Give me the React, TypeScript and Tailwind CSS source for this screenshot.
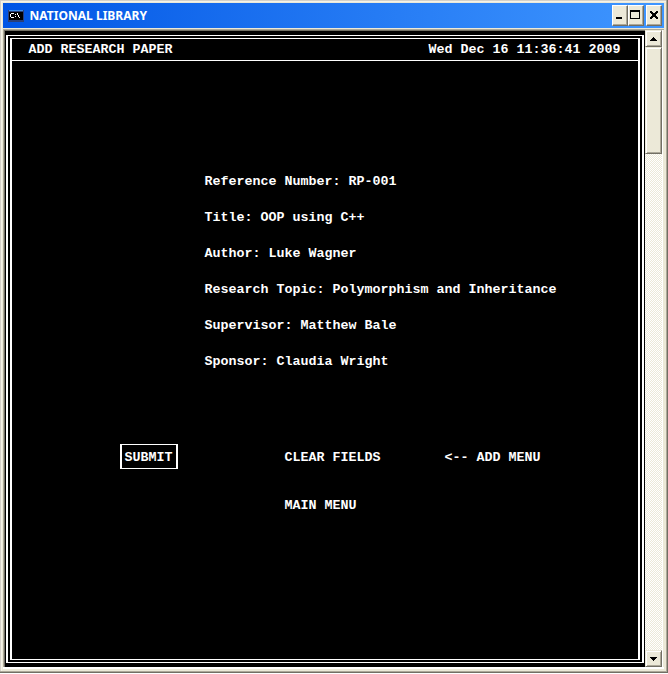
import React from "react";

const box = "h-[21px] border border-t-[#fff] border-l-[#fff] border-r-[#716f64] border-b-[#716f64] bg-[#ece9d8] shadow-[inset_-1px_-1px_0_#aca899] flex items-center justify-center";

function Line({ text, className = "" }: { text: string; className?: string }) {
  return <div className={"h-3 whitespace-pre " + className}>{text}</div>;
}

const fields = [
  "Reference Number: RP-001",
  "Title: OOP using C++",
  "Author: Luke Wagner",
  "Research Topic: Polymorphism and Inheritance",
  "Supervisor: Matthew Bale",
  "Sponsor: Claudia Wright",
];

function TitleBar() {
  return (
    <div className="flex h-[25px] shrink-0 items-center bg-linear-to-r from-[#0055e5] to-[#3f96ff] pr-[2px] pl-[5px]">
      <svg width="16" height="14" viewBox="0 0 16 14" shapeRendering="crispEdges">
        <path fill="#2a3f78" d="M0 1h16v12H0z" />
        <path fill="#3f8fe8" d="M1 1h14v1H1z" />
        <path fill="#000" d="M1 3h14v8H1z" />
        <path fill="#fff" d="M3 4h3v1H3zM2 5h1v3H2zM3 8h3v1H3zM7 5h1v1H7zM7 7h1v1H7zM9 4h1v2H9zM10 6h1v2h-1zM11 8h1v1h-1z" />
      </svg>
      <span className="ml-[5px] w-[118px] font-['Noto_Sans',sans-serif] text-[13px] leading-[25px] font-bold whitespace-nowrap">
        <svg className="overflow-visible" width="118" height="25">
          <text x="0.5" y="17" textLength="117.5" lengthAdjust="spacingAndGlyphs" fill="#fff">NATIONAL LIBRARY</text>
        </svg>
      </span>
      <div className="ml-auto flex">
        <div className={box + " w-4"}>
          <svg className="shrink-0" width="14" height="19" shapeRendering="crispEdges"><path d="M3 11h6v2H3z" /></svg>
        </div>
        <div className={box + " w-4"}>
          <svg className="shrink-0" width="14" height="19" shapeRendering="crispEdges"><path fillRule="evenodd" d="M1 4h10v9H1zM2 6v6h8V6z" /></svg>
        </div>
        <div className={box + " ml-0.5 w-4"}>
          <svg className="shrink-0" width="14" height="19" shapeRendering="crispEdges"><path d="M3 5h2v1H3zM9 5h2v1H9zM3 6h3v1H3zM8 6h3v1H8zM4 7h6v1H4zM5 8h4v2H5zM4 10h6v1H4zM3 11h3v1H3zM8 11h3v1H8zM3 12h2v1H3zM9 12h2v1H9z" /></svg>
        </div>
      </div>
    </div>
  );
}

function ScrollBar() {
  const part = "border border-t-[#ece9d8] border-l-[#ece9d8] border-r-[#716f64] border-b-[#716f64] bg-[#ece9d8] shadow-[inset_1px_1px_0_#fff,inset_-1px_-1px_0_#aca899]";
  return (
    <div className="flex w-[17px] shrink-0 flex-col bg-[conic-gradient(#fff_25%,#ece9d8_0_50%,#fff_0_75%,#ece9d8_0)] bg-size-[2px_2px]">
      <div className={part + " h-[17px]"}>
        <svg width="15" height="15" shapeRendering="crispEdges"><path d="M7 6h1v1h1v1h1v1h1v1H4V9h1V8h1V7h1z" /></svg>
      </div>
      <div className={part + " h-[107px]"} />
      <div className={part + " mt-auto h-[17px]"}>
        <svg width="15" height="15" shapeRendering="crispEdges"><path d="M4 6h7v1h-1v1H9v1H8v1H7V9H6V8H5V7H4z" /></svg>
      </div>
    </div>
  );
}

export default function App() {
  return (
    <div className="h-[674px] w-[668px] overflow-hidden bg-[#ece9d8] shadow-[inset_0_-1px_0_#fff,inset_-1px_-2px_0_#716f64,inset_-2px_-3px_0_#aca899,inset_1px_1px_0_#d4d0c8,inset_2px_2px_0_#f5f3e8]">
      <div className="flex h-[667px] flex-col pt-[3px] pr-1 pl-[3px]">
        <TitleBar />
        <div className="mt-px flex min-h-0 flex-1 border-t border-l border-[#aca899] shadow-[0_2px_0_#fff,0_1px_0_#ece9d8]">
          <div className="flex w-[641px] border-t border-l border-[#716f64] bg-black pt-[4px] pr-px pb-1 pl-px">
            <div className="flex flex-1 border-x-2 border-y border-white px-[2px] py-[2px]">
              <div className="flex-1 border-x-2 border-y border-white font-['Liberation_Mono',monospace] text-[13.333px] leading-[13px] font-bold text-white">
                <div className="flex h-[22px] justify-between border-b border-white pt-1 pr-[17.5px] pl-[16.5px]">
                  <Line text="ADD RESEARCH PAPER" />
                  <Line text="Wed Dec 16 11:36:41 2009" />
                </div>
                <div className="flex flex-col gap-6 pt-[114px] pl-[192.5px]">
                  {fields.map((f) => <Line key={f} text={f} />)}
                </div>
                <div className="flex pt-[77px] pl-[108px]">
                  <div className="h-[25px] w-[58px] border-x-2 border-y border-white pt-1.5 pl-[2.5px]"><Line text="SUBMIT" /></div>
                  <Line text="CLEAR FIELDS" className="mt-[7px] ml-[106.5px] w-40" />
                  <Line text="<-- ADD MENU" className="mt-[7px]" />
                </div>
                <Line text="MAIN MENU" className="mt-[30px] ml-[272.5px]" />
              </div>
            </div>
          </div>
          <div className="flex w-[18px] border-r border-white">
            <ScrollBar />
          </div>
        </div>
      </div>
    </div>
  );
}
